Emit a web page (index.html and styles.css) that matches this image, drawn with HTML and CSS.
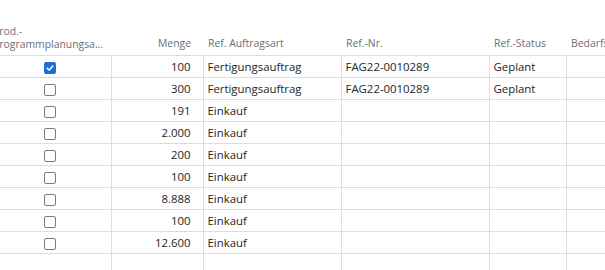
FILE: index.html
```html
<!DOCTYPE html>
<html lang="de">
<head>
    <meta charset="UTF-8">
    <meta name="viewport" content="width=device-width, initial-scale=1.0">
    <title>Bedarfsplanung</title>
    <link rel="stylesheet" href="styles.css">
</head>
<body>
<div class="grid-view">
    <table class="grid">
        <colgroup>
            <col class="c-flag">
            <col class="c-qty">
            <col class="c-type">
            <col class="c-no">
            <col class="c-status">
            <col class="c-rest">
        </colgroup>
        <thead>
        <tr>
            <th class="center-head">Prod.-<br>Programmplanungsa...</th>
            <th class="num">Menge</th>
            <th>Ref. Auftragsart</th>
            <th>Ref.-Nr.</th>
            <th>Ref.-Status</th>
            <th>Bedarfswunschtermin</th>
        </tr>
        </thead>
        <tbody>
        <tr>
            <td class="center"><span class="check checked"><svg viewBox="0 0 12 12"><path d="M2.6 6.2 L5 8.5 L9.4 3.6" fill="none" stroke="#fff" stroke-width="1.8" stroke-linecap="round" stroke-linejoin="round"/></svg></span></td>
            <td class="num">100</td>
            <td>Fertigungsauftrag</td>
            <td>FAG22-0010289</td>
            <td>Geplant</td>
            <td></td>
        </tr>
        <tr>
            <td class="center"><span class="check"></span></td>
            <td class="num">300</td>
            <td>Fertigungsauftrag</td>
            <td>FAG22-0010289</td>
            <td>Geplant</td>
            <td></td>
        </tr>
        <tr>
            <td class="center"><span class="check"></span></td>
            <td class="num">191</td>
            <td>Einkauf</td>
            <td></td><td></td><td></td>
        </tr>
        <tr>
            <td class="center"><span class="check"></span></td>
            <td class="num">2.000</td>
            <td>Einkauf</td>
            <td></td><td></td><td></td>
        </tr>
        <tr>
            <td class="center"><span class="check"></span></td>
            <td class="num">200</td>
            <td>Einkauf</td>
            <td></td><td></td><td></td>
        </tr>
        <tr>
            <td class="center"><span class="check"></span></td>
            <td class="num">100</td>
            <td>Einkauf</td>
            <td></td><td></td><td></td>
        </tr>
        <tr>
            <td class="center"><span class="check"></span></td>
            <td class="num">8.888</td>
            <td>Einkauf</td>
            <td></td><td></td><td></td>
        </tr>
        <tr>
            <td class="center"><span class="check"></span></td>
            <td class="num">100</td>
            <td>Einkauf</td>
            <td></td><td></td><td></td>
        </tr>
        <tr>
            <td class="center"><span class="check"></span></td>
            <td class="num">12.600</td>
            <td>Einkauf</td>
            <td></td><td></td><td></td>
        </tr>
        <tr class="filler">
            <td></td><td></td><td></td><td></td><td></td><td></td>
        </tr>
        </tbody>
    </table>
</div>
</body>
</html>
```

FILE: styles.css
```css
body {
    margin: 0;
    background: #fff;
    font-family: "Open Sans", "Noto Sans", Arial, sans-serif;
    color: #252525;
}

.grid-view {
    width: 605px;
    height: 270px;
    overflow: hidden;
    padding-top: 25px;
    box-sizing: border-box;
}

.grid {
    border-collapse: collapse;
    table-layout: fixed;
    width: 700px;
    margin-left: -11px; /* scrolled a bit to the right */
}

.c-flag { width: 122px; }
.c-qty { width: 92px; }
.c-type { width: 138px; }
.c-no { width: 148px; }
.c-status { width: 77px; }
.c-rest { width: 123px; }

.grid th {
    font-weight: normal;
    font-size: 10.4px;
    line-height: 12px;
    color: #6e6e74;
    text-align: left;
    vertical-align: bottom;
    white-space: nowrap;
    overflow: hidden;
    padding: 0 5px 6px 5px;
    height: 23px;
    border-bottom: 1px solid #dcdde2;
}

.grid th.center-head {
    padding-left: 4px;
    padding-bottom: 5px;
    line-height: 12.5px;
}

.grid td {
    height: 21px;
    padding: 0 4px;
    font-size: 11.4px;
    white-space: nowrap;
    overflow: hidden;
    border-bottom: 1px solid #dcdde2;
    border-left: 1px solid #dcdde2;
}

.grid td:first-child {
    border-left: none;
}

.grid .num {
    text-align: right;
    padding-right: 12px;
}

.grid td.center {
    text-align: center;
    padding: 0;
}

.grid .filler td {
    height: 30px;
    border-bottom: none;
}

.check {
    display: inline-block;
    width: 10px;
    height: 10px;
    border: 1px solid #7a7a7a;
    border-radius: 2px;
    vertical-align: middle;
    background: #fff;
}

.check.checked {
    border-color: #1b6fd6;
    background: #1b6fd6;
}

.check svg {
    display: block;
    width: 10px;
    height: 10px;
}
```
